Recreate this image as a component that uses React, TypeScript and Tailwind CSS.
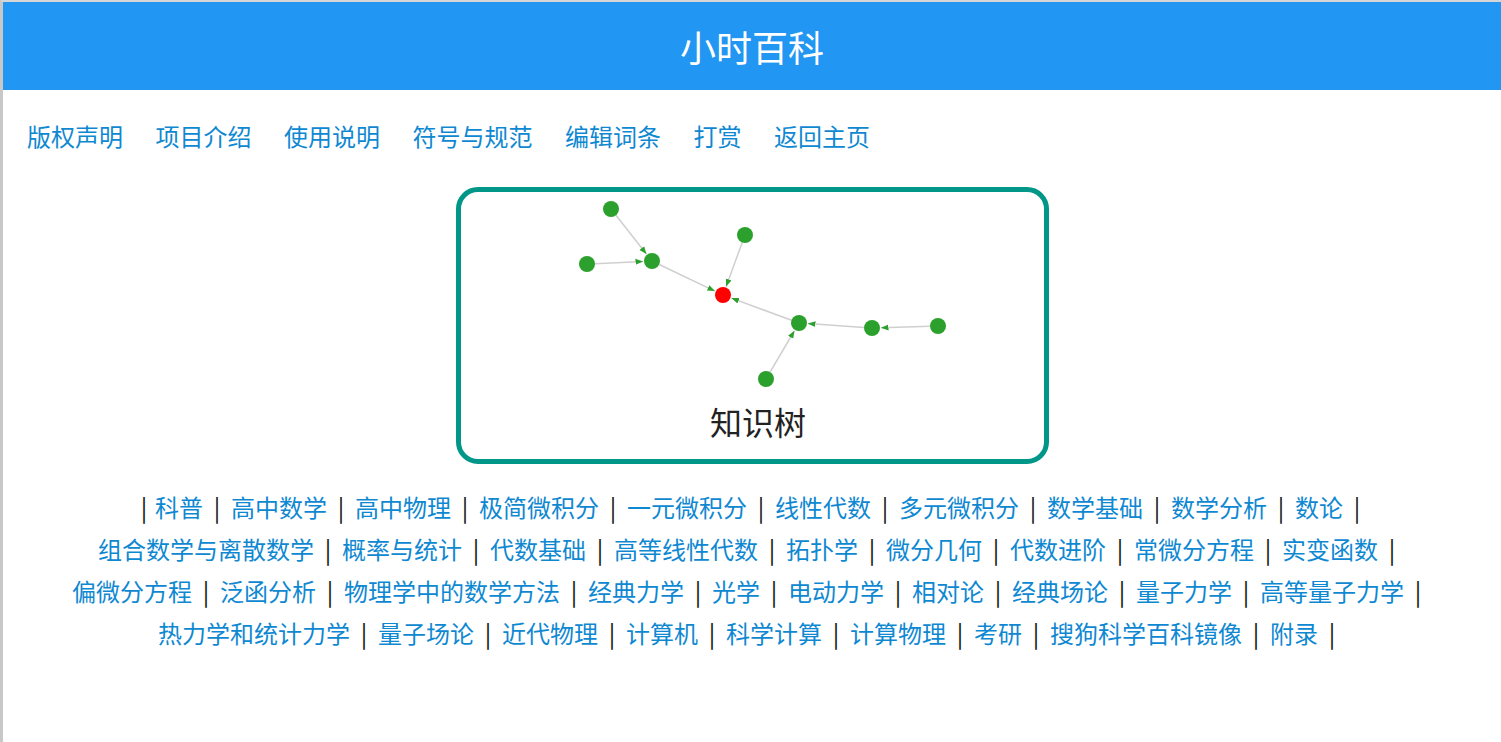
import React from 'react';

const navLinks = ['版权声明', '项目介绍', '使用说明', '符号与规范', '编辑词条', '打赏', '返回主页'];

// 分行与原页面保持一致
const subjectLines: string[][] = [
  ['科普', '高中数学', '高中物理', '极简微积分', '一元微积分', '线性代数', '多元微积分', '数学基础', '数学分析', '数论'],
  ['组合数学与离散数学', '概率与统计', '代数基础', '高等线性代数', '拓扑学', '微分几何', '代数进阶', '常微分方程', '实变函数'],
  ['偏微分方程', '泛函分析', '物理学中的数学方法', '经典力学', '光学', '电动力学', '相对论', '经典场论', '量子力学', '高等量子力学'],
  ['热力学和统计力学', '量子场论', '近代物理', '计算机', '科学计算', '计算物理', '考研', '搜狗科学百科镜像', '附录'],
];

type Node = { id: string; x: number; y: number; root?: boolean };

const nodes: Node[] = [
  { id: 'a', x: 611, y: 209 },
  { id: 'b', x: 587, y: 264 },
  { id: 'c', x: 652, y: 261 },
  { id: 'd', x: 745, y: 235 },
  { id: 'r', x: 723, y: 295, root: true },
  { id: 'e', x: 799, y: 323 },
  { id: 'f', x: 872, y: 328 },
  { id: 'g', x: 938, y: 326 },
  { id: 'h', x: 766, y: 379 },
];

const edges: [string, string][] = [
  ['a', 'c'],
  ['b', 'c'],
  ['c', 'r'],
  ['d', 'r'],
  ['e', 'r'],
  ['f', 'e'],
  ['g', 'f'],
  ['h', 'e'],
];

const R = 8;

const KnowledgeGraph: React.FC = () => {
  const byId = (id: string) => nodes.find((n) => n.id === id)!;
  return (
    <svg width={583} height={205} viewBox="461 192 583 205" className="block">
      <defs>
        <marker id="arrow" viewBox="0 0 10 10" refX="10" refY="5" markerWidth="5" markerHeight="5" orient="auto">
          <path d="M0,1 L10,5 L0,9 z" fill="#2ca02c" />
        </marker>
      </defs>
      {edges.map(([s, t]) => {
        const a = byId(s);
        const b = byId(t);
        const dx = b.x - a.x;
        const dy = b.y - a.y;
        const len = Math.sqrt(dx * dx + dy * dy);
        const ux = dx / len;
        const uy = dy / len;
        return (
          <line
            key={s + t}
            x1={a.x + ux * R}
            y1={a.y + uy * R}
            x2={b.x - ux * (R + 1)}
            y2={b.y - uy * (R + 1)}
            stroke="#cfcfcf"
            strokeWidth={1.5}
            markerEnd="url(#arrow)"
          />
        );
      })}
      {nodes.map((n) => (
        <circle key={n.id} cx={n.x} cy={n.y} r={R} fill={n.root ? '#ff0000' : '#2ca02c'} />
      ))}
    </svg>
  );
};

export default function App() {
  return (
    <div
      className="min-h-[742px] border-t-2 border-l-[3px] border-t-[#d6d6d6] border-l-[#c8c8c8] bg-white"
      style={{ fontFamily: '"Noto Sans CJK SC", "Noto Sans", sans-serif' }}
    >
      {/* 顶部标题 */}
      <header className="flex h-[88px] items-center justify-center bg-[#2196f3]">
        <h1 className="text-[36px] leading-none text-white">小时百科</h1>
      </header>

      {/* 导航 */}
      <nav className="flex gap-x-[32.5px] pl-[24px] pt-[28px] text-[24px] leading-[36px] text-[#0f88d2]">
        {navLinks.map((l) => (
          <a key={l} href="#" className="no-underline">
            {l}
          </a>
        ))}
      </nav>

      {/* 知识树 */}
      <div className="mt-[33px] flex justify-center">
        <div className="flex h-[277px] w-[593px] flex-col items-center rounded-[22px] border-[5px] border-[#009688]">
          <KnowledgeGraph />
          <div className="pl-[12px] text-[32px] leading-[48px] text-[#222]">知识树</div>
        </div>
      </div>

      {/* 学科列表 */}
      <div className="mt-[22px] flex flex-col items-center text-[24px] leading-[42px]">
        {subjectLines.map((line, i) => (
          <div key={i} className="flex items-center">
            {i === 0 && <span className="w-[22px] text-center text-[#111]">|</span>}
            {line.map((s) => (
              <React.Fragment key={s}>
                <a href="#" className="text-[#0f88d2] no-underline">
                  {s}
                </a>
                <span className="w-[28px] text-center text-[#111]">|</span>
              </React.Fragment>
            ))}
          </div>
        ))}
      </div>
    </div>
  );
}
